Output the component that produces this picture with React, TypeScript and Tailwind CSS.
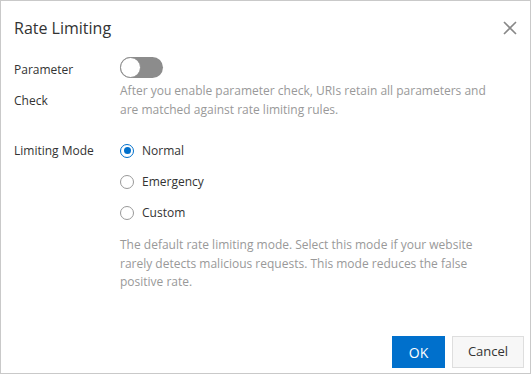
import { useState } from 'react';

const modes = ['Normal', 'Emergency', 'Custom'];

export default function App() {
  const [mode, setMode] = useState('Normal');
  const [paramCheck, setParamCheck] = useState(false);

  return (
    <div className="w-[531px] h-[374px] bg-white border border-[#c9c9c9] flex flex-col text-[#333] font-['Open_Sans',sans-serif] text-[12px]">
      <div className="h-[53px] flex items-center justify-between pl-[13px] pr-[10px]">
        <h1 className="text-[16px] text-[#333]">Rate Limiting</h1>
        <button type="button" className="w-[20px] h-[20px] flex items-center justify-center text-[#888]">
          <svg width="14" height="14" viewBox="0 0 14 14" fill="none" stroke="currentColor" strokeWidth="1.6">
            <path d="M1 1L13 13M13 1L1 13" />
          </svg>
        </button>
      </div>

      <div className="flex-1 px-[13px]">
        <div className="flex">
          <div className="w-[106px] leading-[31px] pr-4">Parameter Check</div>
          <div className="flex-1">
            <div className="h-[27px] flex items-center">
              <button
                type="button"
                onClick={() => setParamCheck(!paramCheck)}
                className="w-[43px] h-[21px] rounded-full bg-[#8c8c8c] flex items-center"
              >
                <span className="w-[21px] h-[21px] rounded-full bg-white border border-[#8c8c8c]" />
              </button>
            </div>
            <p className="leading-[19px] text-[#999] w-[372px]">
              After you enable parameter check, URIs retain all parameters and are matched against rate limiting rules.
            </p>
          </div>
        </div>

        <div className="flex mt-[16px]">
          <div className="w-[106px] leading-[31px]">Limiting Mode</div>
          <div className="flex-1">
            {modes.map((m) => (
              <label key={m} className="h-[31px] flex items-center gap-[8px] cursor-pointer" onClick={() => setMode(m)}>
                {mode === m ? (
                  <span className="w-[14px] h-[14px] rounded-full border-[1.5px] border-[#0070cc] flex items-center justify-center">
                    <span className="w-[7px] h-[7px] rounded-full bg-[#0070cc]" />
                  </span>
                ) : (
                  <span className="w-[14px] h-[14px] rounded-full border border-[#999] bg-white" />
                )}
                <span>{m}</span>
              </label>
            ))}
            <p className="mt-[8px] leading-[18.5px] text-[#999] w-[380px]">
              The default rate limiting mode. Select this mode if your website rarely detects malicious requests. This mode reduces the false positive rate.
            </p>
          </div>
        </div>
      </div>

      <div className="flex justify-end gap-[7px] pr-[6px] pb-[5px]">
        <button type="button" className="w-[53px] h-[32px] bg-[#0070cc] text-white text-[14px]">OK</button>
        <button type="button" className="w-[72px] h-[32px] bg-[#f7f7f7] border border-[#dedede] text-[#333] text-[13px]">Cancel</button>
      </div>
    </div>
  );
}
